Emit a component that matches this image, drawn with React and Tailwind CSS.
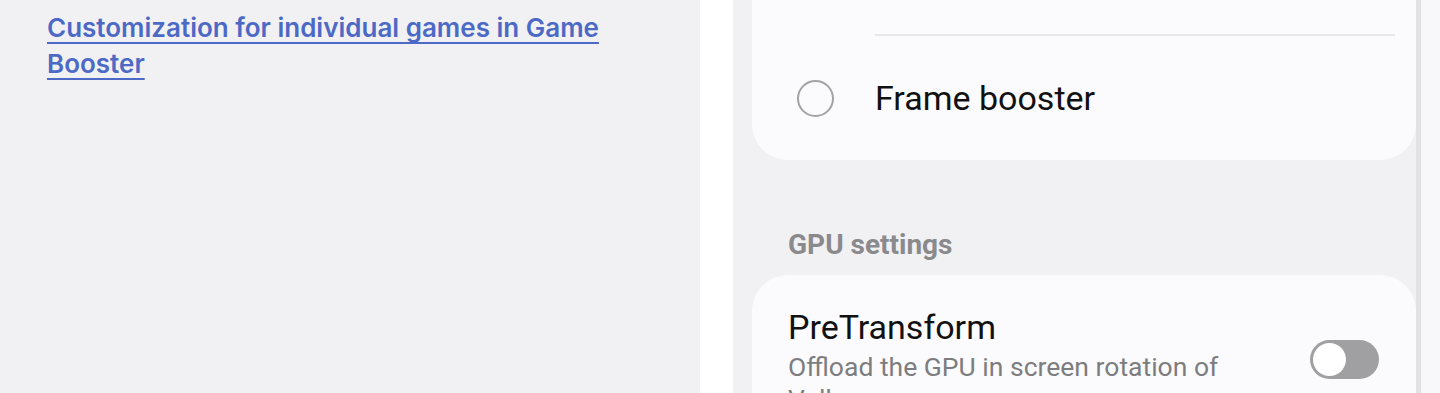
export default function App() {
  return (
    <div className="flex h-[393px] w-[1440px] overflow-hidden">
      {/* article side */}
      <div className="w-[700px] shrink-0 bg-[#f1f1f3] pl-[47px] pt-[10px]">
        <a
          href="#"
          className="block w-[600px] text-[26px] font-semibold leading-[36px] text-[#4d69c6] underline decoration-[2px] underline-offset-[5px] [text-decoration-skip-ink:none]"
          style={{ fontFamily: "Inter, 'Noto Sans', sans-serif" }}
        >
          Customization for individual games in Game Booster
        </a>
      </div>

      <div className="w-[33px] shrink-0 bg-white" />

      {/* phone screenshot */}
      <div
        className="flex flex-1 bg-[#f1f1f4]"
        style={{ fontFamily: "Roboto, 'Noto Sans', sans-serif" }}
      >
        <div className="flex w-[683px] shrink-0 flex-col pl-[19px]">
          <div className="shrink-0 rounded-b-[36px] bg-[#fbfbfd]">
            <div className="h-[34px]" />
            <div className="ml-[123px] mr-[21px] h-[2px] bg-[#e7e7ea]" />
            <div className="flex h-[124px] items-center">
              <div className="ml-[45px] h-[37px] w-[37px] shrink-0 rounded-full border-[2px] border-[#a3a3a3]" />
              <span className="ml-[41px] text-[34px] text-[#111]">Frame booster</span>
            </div>
          </div>

          <div className="flex h-[115px] shrink-0 items-center pl-[36px] pt-[55px]">
            <span className="text-[28px] font-bold text-[#8a8a8c]">GPU settings</span>
          </div>

          <div className="flex flex-1 items-start justify-between rounded-t-[36px] bg-[#fbfbfd] pl-[36px] pr-[37px] pt-[32px]">
            <div className="flex flex-col">
              <span className="text-[34px] leading-[40px] text-[#111]">PreTransform</span>
              <span className="mt-[4px] text-[26.5px] leading-[32px] text-[#7d7d7f]">
                Offload the GPU in screen rotation of
                <br />
                Vulkan
              </span>
            </div>
            <div className="mt-[33px] flex h-[39px] w-[69px] shrink-0 items-center rounded-full bg-[#a0a0a2] p-[3px]">
              <div className="h-[33px] w-[33px] rounded-full bg-white" />
            </div>
          </div>
        </div>
        <div className="w-[5px] shrink-0 bg-[#e2e2e5]" />
        <div className="flex-1 bg-[#f8f8fa]" />
      </div>
    </div>
  );
}
